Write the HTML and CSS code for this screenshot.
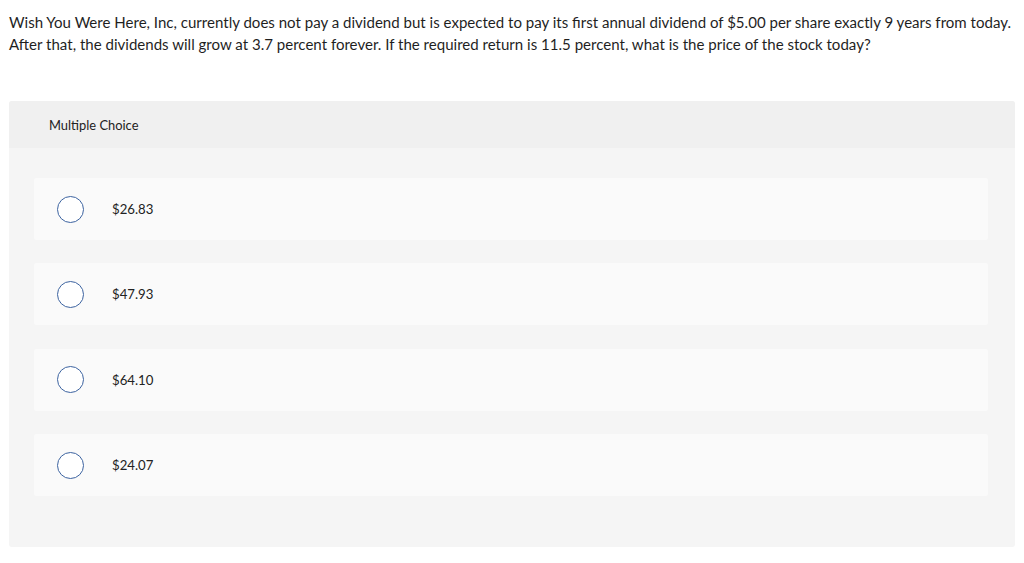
FILE: index.html
```html
<!DOCTYPE html>
<html>
<head>
<meta charset="utf-8">
<link rel="stylesheet" href="styles.css">
</head>
<body>
<p class="question">Wish You Were Here, Inc, currently does not pay a dividend but is expected to pay its first annual dividend of $5.00 per share exactly 9 years from today.<br>After that, the dividends will grow at 3.7 percent forever. If the required return is 11.5 percent, what is the price of the stock today?</p>
<div class="panel">
  <div class="panel-head">Multiple Choice</div>
  <div class="options">
    <div class="option"><span class="radio"></span><span class="label">$26.83</span></div>
    <div class="option"><span class="radio"></span><span class="label">$47.93</span></div>
    <div class="option"><span class="radio"></span><span class="label">$64.10</span></div>
    <div class="option"><span class="radio"></span><span class="label">$24.07</span></div>
  </div>
</div>
</body>
</html>
```
FILE: styles.css
```css
html, body {
  margin: 0;
  padding: 0;
  background: #ffffff;
}
body {
  font-family: "Lato", "Open Sans", sans-serif;
  color: #222222;
}
.question {
  margin: 0;
  padding: 11px 0 0 9px;
  font-size: 15.05px;
  line-height: 22px;
  width: 1015px;
  white-space: nowrap;
  color: #1f1f1f;
}
.panel {
  margin: 46px 9px 0 9px;
  width: 1006px;
  background: #f5f5f5;
  border-radius: 3px;
  padding-bottom: 51px;
}
.panel-head {
  height: 47px;
  background: #f0f0f0;
  display: flex;
  align-items: center;
  padding-left: 40px;
  font-size: 12.9px;
  color: #222;
  border-radius: 3px 3px 0 0;
}
.options {
  padding: 30px 27px 0 25px;
  display: flex;
  flex-direction: column;
  gap: 23.4px;
}
.option {
  height: 62px;
  background: #fafafa;
  display: flex;
  align-items: center;
  border-radius: 2px;
}
.radio {
  box-sizing: border-box;
  width: 27px;
  height: 27px;
  border: 1.3px solid #3c63a0;
  border-radius: 50%;
  background: #fff;
  margin-left: 23px;
  flex: none;
}
.label {
  margin-left: 28px;
  font-size: 13.2px;
  color: #222;
}
```
